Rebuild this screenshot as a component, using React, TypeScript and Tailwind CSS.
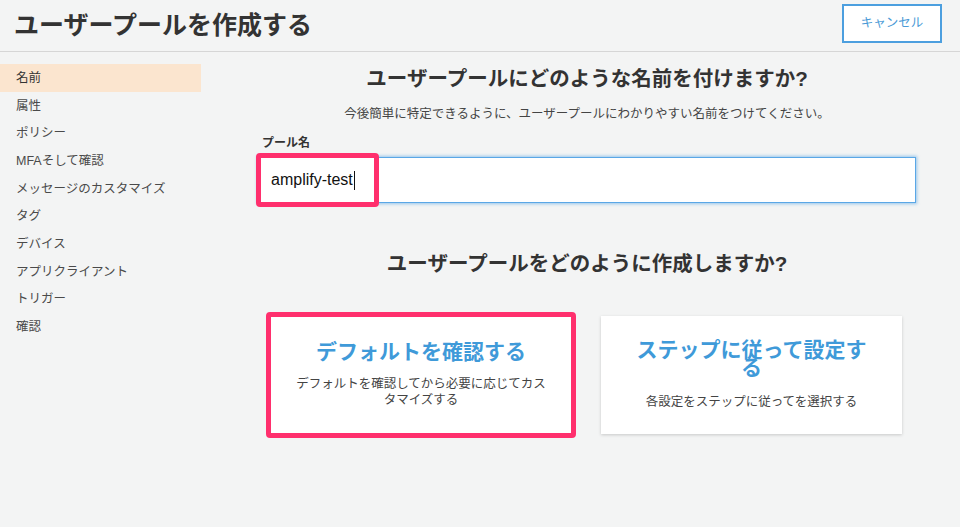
const navItems = [
  "名前",
  "属性",
  "ポリシー",
  "MFAそして確認",
  "メッセージのカスタマイズ",
  "タグ",
  "デバイス",
  "アプリクライアント",
  "トリガー",
  "確認",
];

const font = "font-['Liberation_Sans','Noto_Sans_CJK_JP',sans-serif]";

const App = () => {
  return (
    <div className={`h-[527px] w-[960px] overflow-hidden bg-[#f3f4f4] text-[#333] ${font}`}>
      {/* HEADER */}
      <header className="flex h-[52px] items-center justify-between border-b border-[#d6d6d6] pl-[14px] pr-[18px]">
        <h1 className="mb-[2px] text-[25px] font-bold leading-[30px] text-[#333]">
          ユーザープールを作成する
        </h1>
        <button className="mb-[5px] h-[39px] w-[100px] border-2 border-[#4c9fdf] bg-white text-[12.5px] text-[#4a9ad6]">
          キャンセル
        </button>
      </header>

      <div className="flex">
        {/* SIDEBAR */}
        <nav className="w-[201px] pt-[12px]">
          {navItems.map((item, i) => (
            <div
              key={item}
              className={`flex h-[27.7px] items-center pl-[16px] pt-[1px] text-[12.5px] ${
                i === 0 ? "bg-[#fbe5cf] text-[#333]" : "text-[#4a4a4a]"
              }`}
            >
              {item}
            </div>
          ))}
        </nav>

        {/* MAIN */}
        <main className="box-content w-[658px] pl-[57px]">
          <h2 className="mt-[13px] text-center text-[20.5px] font-bold leading-[28px] text-[#333]">
            ユーザープールにどのような名前を付けますか?
          </h2>
          <p className="mt-[12px] text-center text-[12.5px] leading-[18px] text-[#444]">
            今後簡単に特定できるように、ユーザープールにわかりやすい名前をつけてください。
          </p>
          <label className="mt-[12px] block pl-[4px] text-[12px] font-bold leading-[16px] text-[#333]">
            プール名
          </label>
          <div className="relative mt-[6px]">
            <div className="flex h-[46px] items-center border border-[#5aa7e6] bg-white pl-[12px] text-[16px] text-[#111] shadow-[0_0_3px_1px_rgba(90,167,230,0.6)]">
              amplify-test
              <span className="ml-[1px] h-[19px] w-[1px] bg-[#111]" />
            </div>
            {/* highlight annotation */}
            <div className="absolute left-[-2px] top-[-4px] h-[54px] w-[123px] rounded-[4px] border-[5px] border-[#ff2f6d]" />
          </div>

          <h2 className="mt-[47px] text-center text-[20.5px] font-bold leading-[28px] text-[#333]">
            ユーザープールをどのように作成しますか?
          </h2>

          <div className="ml-[8px] mt-[34px] flex items-center gap-[25px]">
            <div className="flex h-[126px] w-[310px] flex-col items-center justify-center rounded-[4px] border-[5px] border-[#ff2f6d] bg-white text-center">
              <div className="text-[21px] font-bold leading-[18px] text-[#3f9ad9]">
                デフォルトを確認する
              </div>
              <div className="mt-[15px] w-[254px] text-[12.5px] leading-[16px] text-[#444]">
                デフォルトを確認してから必要に応じてカスタマイズする
              </div>
            </div>
            <div className="flex h-[118px] w-[301px] flex-col items-center justify-center bg-white px-[30px] text-center shadow-[0_1px_3px_rgba(0,0,0,0.18)]">
              <div className="text-[21px] font-bold leading-[18px] text-[#3f9ad9]">
                ステップに従って設定する
              </div>
              <div className="mt-[17px] text-[12.5px] leading-[16px] text-[#444]">
                各設定をステップに従ってを選択する
              </div>
            </div>
          </div>
        </main>
      </div>
    </div>
  );
};

export default App;
